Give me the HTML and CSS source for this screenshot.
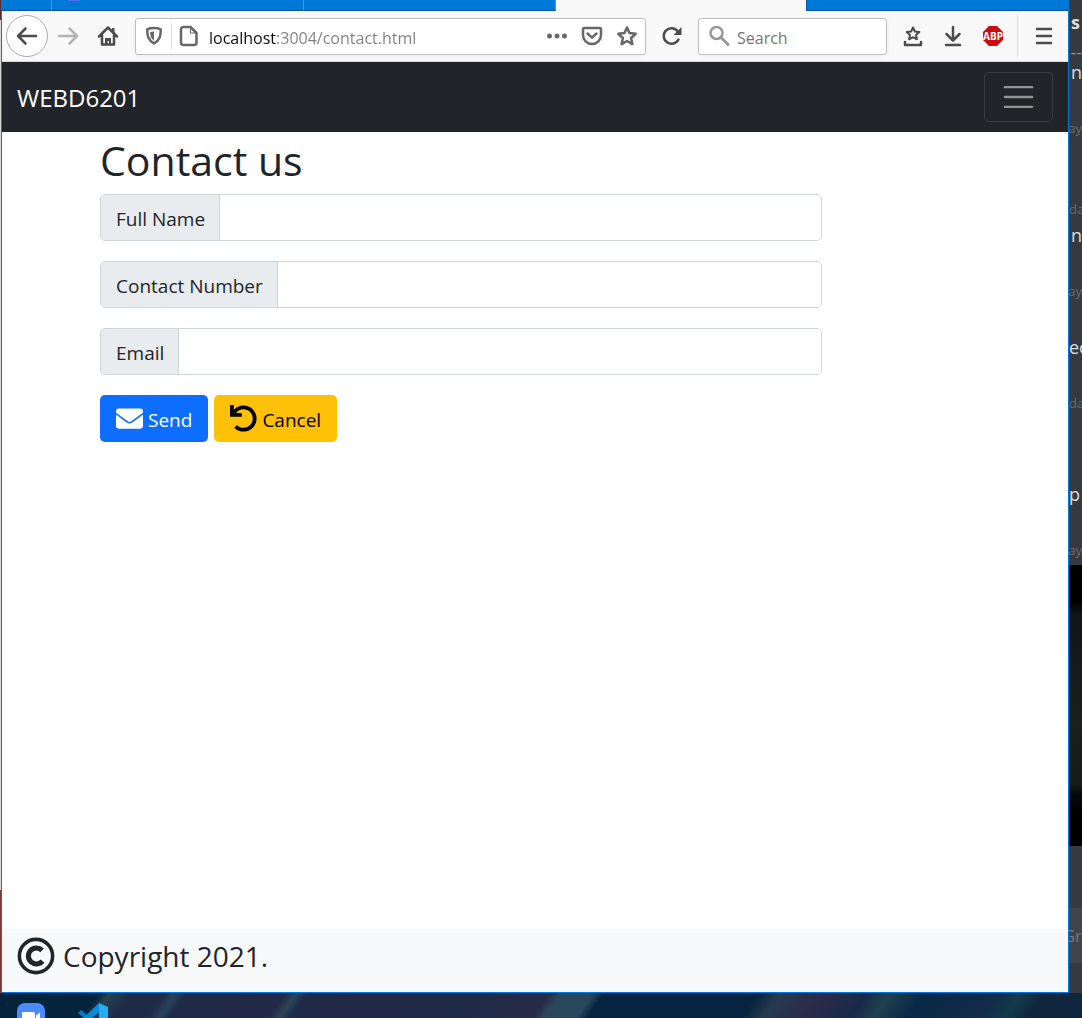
FILE: index.html
```html
<!DOCTYPE html>
<html lang="en">
<head>
<meta charset="utf-8">
<meta name="viewport" content="width=device-width, initial-scale=1">
<title>Contact us</title>
<link rel="stylesheet" href="styles.css">
</head>
<body>
<div class="desktop">
  <div class="left-edge"></div>
  <div class="window">
    <div class="tabs">
      <div class="tab tab-first"></div>
      <div class="tab"><span class="favicon"></span></div>
      <div class="tab"></div>
      <div class="tab tab-active"></div>
      <div class="tab-rest"></div>
    </div>
    <div class="toolbar">
      <button class="tool back" type="button" aria-label="Back">
        <svg width="22" height="22" viewBox="0 0 22 22"><path d="M20 11H2.500M9.500 3.500L2 11l7.500 7.500"/></svg>
      </button>
      <button class="tool forward" type="button" aria-label="Forward">
        <svg width="22" height="22" viewBox="0 0 22 22"><path d="M2 11h17.500M12.500 3.500L20 11l-7.500 7.500"/></svg>
      </button>
      <button class="tool" type="button" aria-label="Home">
        <svg width="22" height="22" viewBox="0 0 22 22"><path d="M2 11.500L11 2.500l9 9M5 10v9.500h12V10"/><path class="fill" d="M8 19v-6h6v6h-2v-3h-1.500v3zM15 3h2.500v6L15 6z"/></svg>
      </button>
      <div class="urlbar">
        <button class="mini" type="button" aria-label="Tracking protection">
          <svg width="20" height="20" viewBox="0 0 20 20"><path d="M10 2c2.500 0 4.800.4 6.800 1.300 0 6.500-.8 10.700-6.800 14.200-6-3.500-6.800-7.700-6.800-14.200C5.200 2.400 7.500 2 10 2z"/><path class="fill" d="M10 5.500v9c-2.800-1.900-3.800-4-3.900-8.300 1.200-.4 2.500-.7 3.900-.7z"/></svg>
        </button>
        <span class="url-divider"></span>
        <svg class="page-icon" width="20" height="22" viewBox="0 0 20 22"><path d="M4.500 2h7l6 6v9.500a2.500 2.500 0 0 1-2.500 2.500H4.500A2.500 2.500 0 0 1 2 17.500v-13A2.500 2.500 0 0 1 4.500 2z"/><path class="thin" d="M11.500 2v6h6"/></svg>
        <input class="url-input" type="text" aria-label="Address" value="localhost:3004/contact.html">
        <button class="mini" type="button" aria-label="Page actions">
          <svg width="22" height="22" viewBox="0 0 22 22"><g class="fill"><circle cx="3.500" cy="11" r="2.500"/><circle cx="11" cy="11" r="2.500"/><circle cx="18.500" cy="11" r="2.500"/></g></svg>
        </button>
        <button class="mini" type="button" aria-label="Save to Pocket">
          <svg width="22" height="22" viewBox="0 0 22 22"><path d="M3.500 3h15a1.500 1.500 0 0 1 1.500 1.500V10a9 9 0 0 1-18 0V4.500A1.500 1.500 0 0 1 3.500 3z"/><path d="M6.500 8.500L11 12.700l4.500-4.200" stroke-linejoin="round"/></svg>
        </button>
        <button class="mini" type="button" aria-label="Bookmark this page">
          <svg width="22" height="22" viewBox="0 0 22 22"><path d="M11 2.500l2.500 5.600 6.200.7-4.600 4.200 1.300 6.100L11 16l-5.400 3.100L6.900 13 2.300 8.800l6.200-.7z"/></svg>
        </button>
      </div>
      <button class="tool reload" type="button" aria-label="Reload">
        <svg width="22" height="22" viewBox="0 0 22 22"><path d="M17.500 14.500a7.800 7.800 0 1 1-.8-8.300"/><path class="fill" d="M20.500 2v8h-8z"/></svg>
      </button>
      <label class="search">
        <svg width="22" height="22" viewBox="0 0 22 22"><circle cx="8.500" cy="8" r="6"/><path d="M13 12.500l7 7" stroke-width="3"/></svg>
        <input class="search-input" type="text" placeholder="Search" aria-label="Search">
      </label>
      <button class="tool" type="button" aria-label="Bookmarks menu">
        <svg width="22" height="22" viewBox="0 0 22 22"><path class="star" d="M11 2.500l1.900 4 4.400.5-3.300 3 .9 4.300-3.900-2.100-3.900 2.100L8 10 4.700 7l4.400-.5z"/><path d="M3 17v3h16v-3"/></svg>
      </button>
      <button class="tool" type="button" aria-label="Downloads">
        <svg width="22" height="22" viewBox="0 0 22 22"><path d="M11 2v13M4.500 9l6.500 6.500L17.500 9M4 20h14"/></svg>
      </button>
      <button class="tool" type="button" aria-label="Adblock Plus"><span class="abp">ABP</span></button>
      <span class="tool-divider"></span>
      <button class="tool" type="button" aria-label="Open menu">
        <svg width="22" height="22" viewBox="0 0 22 22"><path d="M4 4h14M4 11h14M4 18h14"/></svg>
      </button>
    </div>
    <header class="navbar">
      <a class="brand" href="#">WEBD6201</a>
      <button class="toggler" type="button" aria-label="Toggle navigation">
        <svg width="37" height="38" viewBox="0 0 30 30"><path d="M4 7h22M4 15h22M4 23h22"/></svg>
      </button>
    </header>
    <main class="container">
      <h1>Contact us</h1>
      <form class="contact-form">
        <div class="input-group">
          <label for="fullName">Full Name</label>
          <input id="fullName" type="text">
        </div>
        <div class="input-group">
          <label for="contactNumber">Contact Number</label>
          <input id="contactNumber" type="tel">
        </div>
        <div class="input-group">
          <label for="email">Email</label>
          <input id="email" type="email">
        </div>
        <div class="actions">
          <button class="btn btn-primary" type="submit">
            <svg width="27" height="27" viewBox="0 0 512 512"><path d="M502.300 190.800c3.900-3.100 9.700-.2 9.700 4.700V400c0 26.500-21.500 48-48 48H48c-26.500 0-48-21.500-48-48V195.600c0-5 5.700-7.800 9.700-4.700 22.400 17.400 52.100 39.500 154.100 113.600 21.100 15.400 56.700 47.800 92.200 47.600 35.700.3 72-32.800 92.300-47.600 102-74.100 131.600-96.300 154-113.700zM256 320c23.200.4 56.600-29.200 73.400-41.400 132.700-96.300 142.800-104.700 173.400-128.700 5.800-4.500 9.200-11.500 9.200-18.900v-19c0-26.500-21.500-48-48-48H48c-26.500 0-48 21.500-48 48v19c0 7.400 3.400 14.300 9.200 18.900 30.600 23.900 40.700 32.400 173.400 128.700 16.800 12.200 50.200 41.800 73.400 41.400z"/></svg>
            <span>Send</span>
          </button>
          <button class="btn btn-warning" type="reset">
            <svg width="27" height="27" viewBox="0 0 512 512"><path d="M212.333 224.333H12c-6.627 0-12-5.373-12-12V12C0 5.373 5.373 0 12 0h48c6.627 0 12 5.373 12 12v78.112C117.773 39.279 184.260 7.470 258.175 8.007c136.906.994 246.448 111.623 246.157 248.532C504.041 393.258 393.120 504 256.333 504c-64.089 0-122.496-24.313-166.510-64.215-5.099-4.622-5.334-12.554-.467-17.420l33.967-33.967c4.474-4.474 11.662-4.717 16.401-.525C170.760 415.336 211.580 432 256.333 432c97.268 0 176-78.716 176-176 0-97.267-78.716-176-176-176-58.496 0-110.280 28.476-142.274 72.333h98.274c6.627 0 12 5.373 12 12v48c0 6.627-5.373 12-12 12z"/></svg>
            <span>Cancel</span>
          </button>
        </div>
      </form>
    </main>
    <footer class="footer">
      <svg width="38" height="38" viewBox="0 0 512 512"><circle cx="256" cy="256" r="224" stroke-width="48"/><path d="M344 326a108 108 0 1 1-6-146" stroke-width="68"/></svg>
      <span>Copyright 2021.</span>
    </footer>
  </div>
  <aside class="chat">
    <div class="line name">s</div>
    <div class="line dashes">--</div>
    <div class="line">n</div>
    <div class="line stamp gap-l">ay</div>
    <div class="line stamp left gap-xl">da</div>
    <div class="line gap-s">n</div>
    <div class="line stamp gap-l">ay</div>
    <div class="line left gap-l">ec</div>
    <div class="line stamp left gap-l">da</div>
    <div class="line left gap-xxl">p</div>
    <div class="line stamp gap-l">ay</div>
    <div class="picture"></div>
    <div class="composer">Gr</div>
  </aside>
</div>
<div class="taskbar">
  <svg width="28" height="28" viewBox="0 0 28 28"><rect width="28" height="28" rx="8" fill="#4a8cff"/><path d="M5 9h11a2 2 0 0 1 2 2v8H7a2 2 0 0 1-2-2zM19 12.500l4-3v9l-4-3z" fill="#fff"/></svg>
  <svg width="30" height="30" viewBox="0 0 30 30"><path d="M0 10l3-3 20 16v7z" fill="#0078c8"/><path d="M21 0L0 20l3 3L22 9z" fill="#0c8ad8"/><path d="M21 0l9 4v22l-9 4z" fill="#27aef2"/></svg>
</div>
</body>
</html>
```
FILE: styles.css
```css
* {
  box-sizing: border-box;
}

body {
  margin: 0;
  min-height: 100vh;
  display: flex;
  flex-direction: column;
  font-family: "Open Sans", "Noto Sans", sans-serif;
  color: #212529;
  background: #0b2540;
}

button,
input {
  font: inherit;
}

svg {
  display: block;
  flex: none;
}

.desktop {
  flex: 1;
  display: flex;
}

.left-edge {
  width: 1px;
  background: linear-gradient(#5a3038 20px, #d8d8d8 20px, #d8d8d8 890px, #7a3a34 890px);
}

.window {
  flex: 1;
  min-width: 0;
  display: flex;
  flex-direction: column;
  background: #fff;
  border: 1px solid #0078d7;
  border-top: 0;
}

/* Browser tabs */
.tabs {
  display: flex;
  height: 11px;
  background: #0078d7;
  overflow: hidden;
}

.tab {
  width: 252px;
  border-right: 1px solid #3f9be3;
  border-bottom: 1px solid #00579c;
}

.tab-first {
  width: 50px;
}

.tab-active {
  width: 250px;
  background: #f9f9fa;
  border: 0;
}

.tab-rest {
  flex: 1;
  border-left: 1px solid #00579c;
  border-bottom: 1px solid #00579c;
}

.favicon {
  display: block;
  width: 12px;
  height: 1px;
  margin-left: 16px;
  background: #4a6cf7;
}

/* Browser toolbar */
.toolbar {
  display: flex;
  align-items: center;
  height: 51px;
  padding: 0 4px;
  background: #f9f9fa;
  border-bottom: 1px solid #d5dbd9;
}

.tool,
.mini {
  display: flex;
  align-items: center;
  justify-content: center;
  flex: none;
  width: 40px;
  height: 40px;
  padding: 0;
  border: 0;
  background: none;
}

.mini {
  width: 35px;
  height: 35px;
}

.toolbar svg {
  fill: none;
  stroke: #4c4c4d;
  stroke-width: 2.5;
  stroke-linecap: round;
  stroke-linejoin: round;
}

.toolbar .urlbar svg {
  stroke: #67676a;
}

.toolbar .fill {
  fill: #4c4c4d;
  stroke: none;
}

.toolbar .urlbar .fill {
  fill: #67676a;
}

.toolbar .thin {
  stroke-width: 1;
}

.toolbar .star {
  stroke-width: 2;
}

.tool.back {
  width: 42px;
  height: 42px;
  border: 1px solid #adadae;
  border-radius: 50%;
  background: #fff;
}

.toolbar .forward svg {
  stroke: #b4b4b5;
}

.urlbar,
.search {
  display: flex;
  align-items: center;
  height: 37px;
  background: #fff;
  border: 1px solid #bfbfc0;
  border-radius: 3px;
  box-shadow: 0 1px 4px rgba(0, 0, 0, 0.06);
}

.urlbar {
  flex: 1;
  min-width: 0;
  margin-left: 7px;
  padding-right: 1px;
}

.url-divider {
  width: 1px;
  height: 26px;
  margin-right: 7px;
  background: #dcdcdd;
}

.url-input {
  flex: 1;
  min-width: 0;
  margin-left: 10px;
  padding: 3px 0 0;
  border: 0;
  font-size: 16px;
  line-height: 26px;
  color: transparent;
  background: linear-gradient(90deg, #0c0c0d 67px, #7f7f80 67px);
  background-clip: text;
}

.reload {
  margin: 0 6px;
}

.search {
  width: 189px;
  margin-right: 6px;
  padding: 0 9px;
}

.toolbar .search svg {
  stroke: #98989a;
}

.search-input {
  flex: 1;
  min-width: 0;
  margin-left: 7px;
  padding: 3px 0 0;
  border: 0;
  background: none;
  font-size: 16px;
  line-height: 26px;
}

.search-input::placeholder {
  color: #757576;
  opacity: 1;
}

.abp {
  width: 20px;
  background: #c70d0d;
  color: #fff;
  font-family: "Noto Sans", sans-serif;
  font-size: 10px;
  font-weight: 700;
  line-height: 20px;
  text-align: center;
  clip-path: polygon(30% 0, 70% 0, 100% 30%, 100% 70%, 70% 100%, 30% 100%, 0 70%, 0 30%);
}

.tool-divider {
  width: 1px;
  height: 42px;
  margin: 0 6px 0 4px;
  background: #dcdcdd;
}

/* Site */
.navbar {
  display: flex;
  align-items: center;
  justify-content: space-between;
  padding: 10px 15px;
  background: #212529;
}

.brand {
  padding-top: 2px;
  color: #fff;
  font-size: 24px;
  line-height: 38px;
  text-decoration: none;
}

.toggler {
  padding: 5px 15px;
  border: 1px solid #373b3e;
  border-radius: 5px;
  background: none;
}

.toggler svg {
  stroke: #909294;
  stroke-width: 2;
  stroke-linecap: round;
}

.container {
  flex: 1;
  width: 100%;
  max-width: 900px;
  margin: 0 auto;
  padding: 0 15px;
}

h1 {
  margin: 0 0 6px;
  font-size: 41px;
  font-weight: 400;
  line-height: 56px;
}

.contact-form {
  display: flex;
  flex-direction: column;
  gap: 20px;
  width: 83%;
  font-size: 19px;
  line-height: 30px;
}

.input-group {
  display: flex;
  height: 47px;
  border: 1px solid #ced4da;
  border-radius: 5px;
  overflow: hidden;
}

.input-group label {
  padding: 9px 14px 6px 15px;
  background: #e9ecef;
  border-right: 1px solid #ced4da;
}

.input-group input {
  flex: 1;
  min-width: 0;
  padding: 0 15px;
  border: 0;
}

.actions {
  display: flex;
  gap: 6px;
}

.btn {
  display: flex;
  align-items: center;
  gap: 5px;
  height: 47px;
  padding: 0 16px;
  border: 0;
  border-radius: 5px;
}

.btn svg {
  fill: currentColor;
}

.btn span {
  padding-top: 2px;
}

.btn-primary {
  color: #fff;
  background: #0d6efd;
}

.btn-warning {
  color: #000;
  background: #ffc107;
}

.footer {
  display: flex;
  align-items: center;
  gap: 8px;
  height: 63px;
  padding: 0 15px 9px;
  background: #f8f9fa;
  font-size: 28px;
}

.footer svg {
  fill: none;
  stroke: #212529;
}

/* Chat window behind the browser */
.chat {
  width: 13px;
  padding-top: 12px;
  background: #36393f;
  color: #dcddde;
  font-size: 18px;
  line-height: 20px;
  overflow: hidden;
}

.line {
  display: flex;
  justify-content: flex-end;
  height: 20px;
}

.left {
  justify-content: flex-start;
}

.name {
  justify-content: center;
  font-weight: 700;
}

.dashes {
  margin-top: 10px;
  color: #8e9297;
}

.stamp {
  color: #686b71;
  font-size: 13px;
}

.gap-s {
  margin-top: 6px;
}

.gap-l {
  margin-top: 36px;
}

.gap-xl {
  margin-top: 61px;
}

.gap-xxl {
  margin-top: 71px;
}

.picture {
  height: 281px;
  margin-top: 5px;
  background: linear-gradient(#000 36px, #101615 50px, #1b201f 160px, #161b18 220px, #05080d 230px, #000 250px);
}

.composer {
  display: flex;
  justify-content: flex-end;
  height: 55px;
  margin-top: 62px;
  background: #40444b;
  color: #72767d;
  font-size: 17px;
  line-height: 55px;
}

.taskbar {
  display: flex;
  gap: 33px;
  height: 25px;
  padding: 10px 17px 0;
  overflow: hidden;
  background: linear-gradient(125deg, #04233c 0 9%, #24424f 10%, #1f2a48 12%, #1f2a48 15%, #28425a 16%, #1f2a48 17%, #232848 26%, #2a4658 27%, #1f2a48 28%, #232848 33%, #1f2a48 43%, #262a48 50%, #28475c 51% 54%, #06243f 55% 69%, #26384f 71%, #2c2a4a 75%, #172a48 79%, #20404f 81%, #0a2848 84%, #122c4a 91%, #123a4c 93%, #10263f 95%);
}
```
